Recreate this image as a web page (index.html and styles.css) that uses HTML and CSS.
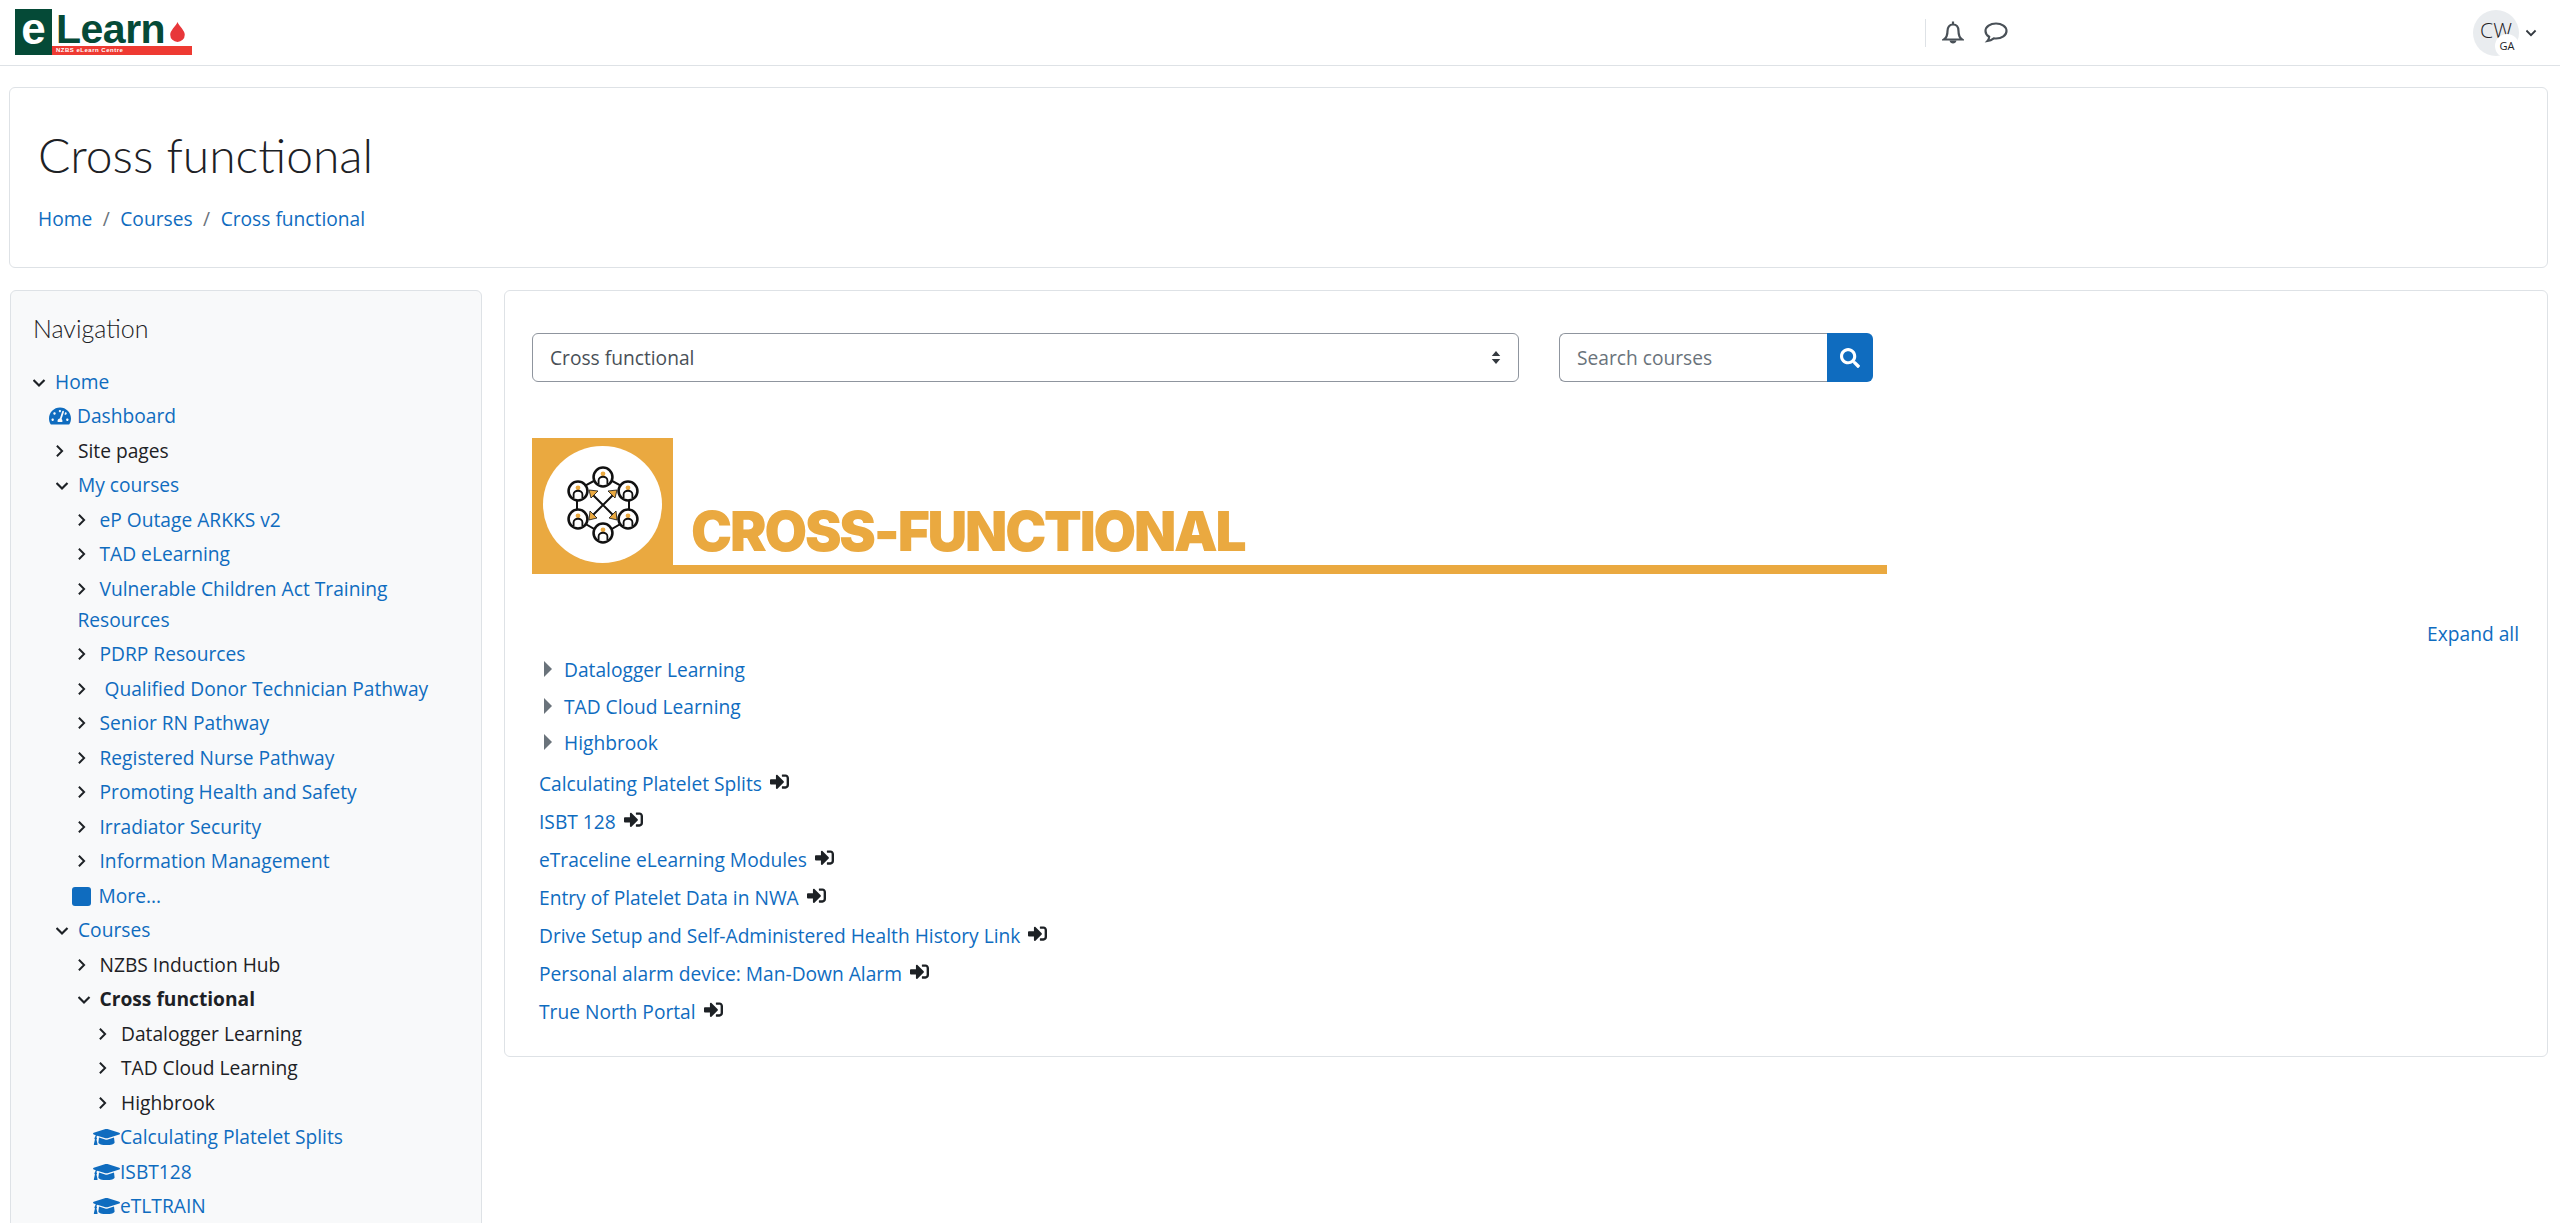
FILE: index.html
```html
<!DOCTYPE html>
<html lang="en">
  <head>
    <meta charset="UTF-8" />
    <title>Cross functional</title>
    <link rel="stylesheet" href="styles.css">
  </head>
  <body>
    <svg class="defs" width="0" height="0">
      <symbol id="chev-right" viewBox="2 0 12 16" preserveAspectRatio="xMinYMid meet"><path d="M3 2l6 6-6 6" fill="none" stroke="currentColor" stroke-width="2.2"/></symbol>
      <symbol id="chev-down" viewBox="1 0 14 12" preserveAspectRatio="xMinYMid meet"><path d="M1.5 3l5.5 5.5L12.500 3" fill="none" stroke="currentColor" stroke-width="2.2"/></symbol>
      <symbol id="cap" viewBox="0 0 640 512"><path d="M622.34 153.2L343.4 67.5c-15.2-4.67-31.6-4.67-46.79 0L17.66 153.2c-23.54 7.23-23.54 38.36 0 45.59l48.63 14.94c-10.67 13.19-17.23 29.28-17.88 46.9C38.78 266.15 32 276.11 32 288c0 10.78 5.68 19.85 13.86 25.65L20.33 428.53C18.11 438.52 25.71 448 35.94 448h56.11c10.24 0 17.84-9.48 15.62-19.47L82.14 313.65C90.32 307.85 96 298.78 96 288c0-11.57-6.47-21.25-15.66-26.87.76-15.02 8.44-28.3 20.69-36.72L296.6 284.5c9.06 2.78 26.44 6.25 46.79 0l278.95-85.7c23.55-7.24 23.55-38.36 0-45.6zM352.79 315.09c-28.53 8.76-52.84 3.92-65.59 0l-145.02-44.55L128 384c0 35.35 85.96 64 192 64s192-28.65 192-64l-14.18-113.47-145.03 44.56z" fill="currentColor"/></symbol>
      <symbol id="enter" viewBox="0 0 512 512"><path d="M416 448h-84c-6.6 0-12-5.4-12-12v-40c0-6.6 5.4-12 12-12h84c17.7 0 32-14.3 32-32V160c0-17.7-14.3-32-32-32h-84c-6.6 0-12-5.400-12-12V76c0-6.600 5.400-12 12-12h84c53 0 96 43 96 96v192c0 53-43 96-96 96zm-47-201L201 79c-15-15-41-4.500-41 17v96H24c-13.300 0-24 10.700-24 24v96c0 13.300 10.700 24 24 24h136v96c0 21.500 26 32 41 17l168-168c9.300-9.400 9.300-24.600 0-34z" fill="currentColor"/></symbol>
      <symbol id="person" viewBox="0 0 24 24">
        <circle cx="12" cy="12" r="10.300" fill="#fff" stroke="#111" stroke-width="2.800"/>
        <circle cx="12" cy="8.500" r="2.600" fill="#eaa940"/>
        <path d="M7.200 20v-4.500a4.800 3.800 0 0 1 9.600 0V20" fill="#fff" stroke="#111" stroke-width="2"/>
      </symbol>
    </svg>

    <header class="topbar">
      <a class="logo" href="#">
        <span class="logo-e">e</span>
        <span class="logo-right">
          <span class="logo-word">Learn<svg class="logo-drop" viewBox="0 0 16 22"><path d="M8 0c2 5 8 9 8 14a8 8 0 0 1-16 0C0 9 6 5 8 0z"/></svg></span>
          <span class="logo-sub">NZBS eLearn Centre</span>
        </span>
      </a>
      <div class="popovers">
        <svg class="bell" viewBox="0 0 22 24"><path d="M11 .5v3M11 3.500c-3.600 0-5.500 2.800-5.500 6.500 0 4.500-1.500 7-3.500 8.500h18c-2-1.500-3.500-4-3.500-8.500 0-3.700-1.900-6.500-5.500-6.500z" fill="none" stroke="#495057" stroke-width="2.200"/><path d="M7.500 19.500c.5 4 6.500 4 7 0z" fill="#495057"/></svg>
        <svg class="comment" viewBox="0 0 24 21"><path d="M12 1.500c-5.800 0-10.500 3.200-10.500 7.500 0 2.500 1.500 4.500 3.700 5.800-.1 1.600-.6 3-1.700 4.200 2.500-.3 4.700-1.500 6.300-2.700.7.100 1.400.2 2.200.2 5.800 0 10.500-3.200 10.500-7.500S17.800 1.500 12 1.500z" fill="none" stroke="#495057" stroke-width="2.200"/></svg>
      </div>
      <div class="usermenu">
        <span class="avatar">CW<span class="avatar-badge">GA</span></span>
        <svg class="menu-caret"><use href="#chev-down"/></svg>
      </div>
    </header>

    <section class="page-head">
      <h1>Cross functional</h1>
      <nav class="crumbs">
        <a href="#">Home</a><span class="sep">/</span><a href="#">Courses</a><span class="sep">/</span><a href="#">Cross functional</a>
      </nav>
    </section>

    <div class="columns">
      <aside class="sidebar">
        <h2>Navigation</h2>
        <ul class="navtree">
          <li class="lv1"><svg class="tw down"><use href="#chev-down"/></svg><a href="#">Home</a></li>
          <li class="lv2 dash">
            <svg class="dash-icon" viewBox="0 0 576 512"><path d="M288 32C128.940 32 0 160.940 0 320c0 52.800 14.250 102.260 39.060 144.800 5.610 9.620 16.300 15.200 27.440 15.200h443c11.140 0 21.830-5.580 27.440-15.200C561.750 422.260 576 372.800 576 320c0-159.060-128.940-288-288-288zm0 64c14.710 0 26.580 10.130 30.320 23.650-1.110 2.260-2.640 4.230-3.450 6.670l-9.220 27.670c-5.130 3.490-10.970 6.010-17.640 6.010-17.670 0-32-14.330-32-32S270.330 96 288 96zM96 384c-17.670 0-32-14.330-32-32s14.330-32 32-32 32 14.330 32 32-14.330 32-32 32zm48-160c-17.670 0-32-14.330-32-32s14.330-32 32-32 32 14.330 32 32-14.330 32-32 32zm246.770-72.410l-61.330 184C343.130 347.330 352 364.540 352 384c0 11.720-3.380 22.550-8.880 32H232.880c-5.500-9.450-8.880-20.280-8.880-32 0-33.940 26.500-61.430 59.900-63.590l61.340-184.010c4.170-12.560 17.730-19.450 30.360-15.170 12.570 4.190 19.350 17.790 15.170 30.360zm14.660 57.200l15.520-46.550c3.470-1.290 7.130-2.230 11.050-2.230 17.670 0 32 14.330 32 32s-14.330 32-32 32c-11.380-.01-20.890-6.280-26.570-15.220zM480 384c-17.670 0-32-14.330-32-32s14.330-32 32-32 32 14.330 32 32-14.330 32-32 32z" fill="currentColor"/></svg><a href="#">Dashboard</a>
          </li>
          <li class="lv2"><svg class="tw"><use href="#chev-right"/></svg><span>Site pages</span></li>
          <li class="lv2"><svg class="tw down"><use href="#chev-down"/></svg><a href="#">My courses</a></li>
          <li class="lv3"><svg class="tw"><use href="#chev-right"/></svg><a href="#">eP Outage ARKKS v2</a></li>
          <li class="lv3"><svg class="tw"><use href="#chev-right"/></svg><a href="#">TAD eLearning</a></li>
          <li class="lv3 wrapped"><svg class="tw"><use href="#chev-right"/></svg><a href="#">Vulnerable Children Act Training Resources</a></li>
          <li class="lv3"><svg class="tw"><use href="#chev-right"/></svg><a href="#">PDRP Resources</a></li>
          <li class="lv3"><svg class="tw"><use href="#chev-right"/></svg><a href="#">&nbsp;Qualified Donor Technician Pathway</a></li>
          <li class="lv3"><svg class="tw"><use href="#chev-right"/></svg><a href="#">Senior RN Pathway</a></li>
          <li class="lv3"><svg class="tw"><use href="#chev-right"/></svg><a href="#">Registered Nurse Pathway</a></li>
          <li class="lv3"><svg class="tw"><use href="#chev-right"/></svg><a href="#">Promoting Health and Safety</a></li>
          <li class="lv3"><svg class="tw"><use href="#chev-right"/></svg><a href="#">Irradiator Security</a></li>
          <li class="lv3"><svg class="tw"><use href="#chev-right"/></svg><a href="#">Information Management</a></li>
          <li class="lv3 more"><span class="more-box"></span><a href="#">More...</a></li>
          <li class="lv2"><svg class="tw down"><use href="#chev-down"/></svg><a href="#">Courses</a></li>
          <li class="lv3"><svg class="tw"><use href="#chev-right"/></svg><span>NZBS Induction Hub</span></li>
          <li class="lv3"><svg class="tw down"><use href="#chev-down"/></svg><strong>Cross functional</strong></li>
          <li class="lv4"><svg class="tw"><use href="#chev-right"/></svg><span>Datalogger Learning</span></li>
          <li class="lv4"><svg class="tw"><use href="#chev-right"/></svg><span>TAD Cloud Learning</span></li>
          <li class="lv4"><svg class="tw"><use href="#chev-right"/></svg><span>Highbrook</span></li>
          <li class="lv4 course"><svg class="cap"><use href="#cap"/></svg><a href="#">Calculating Platelet Splits</a></li>
          <li class="lv4 course"><svg class="cap"><use href="#cap"/></svg><a href="#">ISBT128</a></li>
          <li class="lv4 course"><svg class="cap"><use href="#cap"/></svg><a href="#">eTLTRAIN</a></li>
        </ul>
      </aside>

      <main class="content">
        <div class="controls">
          <div class="fake-select">
            <span>Cross functional</span>
            <svg class="updown" viewBox="0 0 10 16"><path d="M5 1l4.500 5.500h-9zM5 15L.5 9.500h9z" fill="#343a40"/></svg>
          </div>
          <div class="searchbox">
            <span class="placeholder">Search courses</span>
            <button class="searchbtn">
              <svg viewBox="0 0 512 512"><path d="M505 442.700L405.300 343c-4.500-4.500-10.600-7-17-7H372c27.600-35.300 44-79.700 44-128C416 93.100 322.900 0 208 0S0 93.100 0 208s93.100 208 208 208c48.300 0 92.700-16.400 128-44v16.300c0 6.400 2.500 12.500 7 17l99.700 99.700c9.400 9.400 24.600 9.400 33.900 0l28.300-28.300c9.400-9.400 9.400-24.600.1-34zM208 336c-70.700 0-128-57.200-128-128 0-70.700 57.200-128 128-128 70.700 0 128 57.200 128 128 0 70.700-57.200 128-128 128z" fill="#fff"/></svg>
            </button>
          </div>
        </div>

        <div class="banner">
          <div class="banner-square">
            <div class="banner-circle">
              <svg class="network" viewBox="0 0 72 78">
                <path d="M36 10L10 24v29l26 15 26-15V24z" fill="none" stroke="#111" stroke-width="2"/>
                <path d="M24 27l24 24M48 27L24 51" stroke="#111" stroke-width="2"/>
                <path d="M22 24l9 1-7 7zM50 24l-9 1 7 7zM22 54l1-9 7 7zM50 54l-1-9-7 7z" fill="#eaa940" stroke="#111" stroke-width=".8"/>
                <use href="#person" x="25" y="0" width="22" height="22"/>
                <use href="#person" x="0" y="14" width="22" height="22"/>
                <use href="#person" x="50" y="14" width="22" height="22"/>
                <use href="#person" x="0" y="42" width="22" height="22"/>
                <use href="#person" x="50" y="42" width="22" height="22"/>
                <use href="#person" x="25" y="56" width="22" height="22"/>
              </svg>
            </div>
          </div>
          <div class="banner-right">
            <span class="banner-title">CROSS-FUNCTIONAL</span>
            <div class="banner-rule"></div>
          </div>
        </div>

        <div class="expand-row"><a href="#">Expand all</a></div>

        <ul class="cat-tree">
          <li><span class="tri"></span><a href="#">Datalogger Learning</a></li>
          <li><span class="tri"></span><a href="#">TAD Cloud Learning</a></li>
          <li><span class="tri"></span><a href="#">Highbrook</a></li>
        </ul>

        <ul class="course-links">
          <li><a href="#">Calculating Platelet Splits</a><svg class="enter"><use href="#enter"/></svg></li>
          <li><a href="#">ISBT 128</a><svg class="enter"><use href="#enter"/></svg></li>
          <li><a href="#">eTraceline eLearning Modules</a><svg class="enter"><use href="#enter"/></svg></li>
          <li><a href="#">Entry of Platelet Data in NWA</a><svg class="enter"><use href="#enter"/></svg></li>
          <li><a href="#">Drive Setup and Self-Administered Health History Link</a><svg class="enter"><use href="#enter"/></svg></li>
          <li><a href="#">Personal alarm device: Man-Down Alarm</a><svg class="enter"><use href="#enter"/></svg></li>
          <li><a href="#">True North Portal</a><svg class="enter"><use href="#enter"/></svg></li>
        </ul>
      </main>
    </div>
  </body>
</html>
```

FILE: styles.css
```css
html, body {
  height: 100%;
  overflow: hidden;
}
body {
  margin: 0;
  font-family: "Open Sans", sans-serif;
  font-size: 19.2px;
  line-height: 31px;
  color: #1d2125;
  background-color: #fff;
}
a {
  color: #0f6cbf;
  text-decoration: none;
}
ul {
  list-style: none;
  margin: 0;
  padding: 0;
}
.defs {
  position: absolute;
}

/* top bar */
.topbar {
  display: flex;
  align-items: center;
  height: 65px;
  border-bottom: 1px solid #dee2e6;
  padding-left: 15px;
}
.logo {
  display: flex;
  height: 46px;
  margin-top: -1px;
}
.logo-e {
  width: 37px;
  background-color: #054a37;
  color: #fff;
  font-family: "Liberation Sans", sans-serif;
  font-weight: bold;
  font-size: 44px;
  line-height: 40px;
  text-align: center;
}
.logo-right {
  display: flex;
  flex-direction: column;
  width: 140px;
}
.logo-word {
  display: flex;
  height: 37px;
  padding-left: 4px;
  color: #054a37;
  font-family: "Liberation Sans", sans-serif;
  font-weight: bold;
  font-size: 41px;
  line-height: 40px;
  letter-spacing: -.5px;
}
.logo-drop {
  width: 15px;
  height: 20px;
  margin: 13px 0 0 5px;
  fill: #e8373a;
}
.logo-sub {
  height: 9px;
  padding-left: 4px;
  background-color: #ee3a32;
  color: #fff;
  font-family: "Liberation Sans", sans-serif;
  font-weight: bold;
  font-size: 6px;
  line-height: 9px;
  letter-spacing: .5px;
  white-space: nowrap;
}
.popovers {
  display: flex;
  align-items: center;
  margin-left: auto;
  height: 28px;
  padding-left: 16px;
  border-left: 1px solid #dee2e6;
  margin-right: 465px;
}
.bell {
  width: 22px;
  height: 24px;
}
.comment {
  width: 24px;
  height: 21px;
  margin-left: 20px;
}
.usermenu {
  display: flex;
  align-items: center;
  margin-right: 22px;
}
.avatar {
  position: relative;
  width: 46px;
  height: 46px;
  border-radius: 50%;
  background-color: #e9ecef;
  font-size: 21px;
  font-weight: 300;
  line-height: 40px;
  text-align: center;
}
.avatar-badge {
  position: absolute;
  right: 0;
  bottom: -2px;
  width: 24px;
  height: 24px;
  border-radius: 50%;
  background-color: #fff;
  font-size: 11px;
  font-weight: 400;
  line-height: 24px;
}
.menu-caret {
  width: 12px;
  height: 10px;
  margin-left: 7px;
  color: #343a40;
}

/* page heading */
.page-head {
  margin: 21px 12px 0 9px;
  height: 179px;
  padding: 0 28px;
  border: 1px solid #dee2e6;
  border-radius: 6px;
}
.page-head h1 {
  margin: 33px 0 0;
  font-family: Lato, sans-serif;
  font-size: 48px;
  font-weight: 300;
  line-height: 68px;
}
.crumbs {
  margin-top: 14px;
}
.sep {
  margin: 0 10.500px;
  color: #6a737b;
}

/* columns */
.columns {
  display: flex;
  align-items: flex-start;
  gap: 22px;
  margin: 22px 12px 0 10px;
}
.sidebar {
  flex: none;
  box-sizing: border-box;
  width: 472px;
  height: 960px;
  padding: 20px 0 0;
  background-color: #f8f9fa;
  border: 1px solid #dee2e6;
  border-radius: 6px;
}
.sidebar h2 {
  margin: 0 0 19px 22px;
  font-family: Lato, sans-serif;
  font-size: 25px;
  font-weight: 300;
  line-height: 34px;
}
.navtree li {
  padding-top: 1.750px;
  padding-bottom: 1.750px;
}
.lv1 { padding-left: 22px; }
.lv2 { padding-left: 45px; }
.lv3 { padding-left: 66.500px; }
.lv4 { padding-left: 88px; }
.tw {
  display: inline-block;
  width: 22px;
  height: 14px;
  color: #1d2125;
}
.tw.down {
  height: 12px;
}
.dash-icon {
  display: inline-block;
  width: 22px;
  height: 20px;
  margin: 0 6px 0 -7px;
  color: #0f6cbf;
  vertical-align: -3px;
}
.more-box {
  display: inline-block;
  width: 19px;
  height: 19px;
  margin: 0 8px 0 -6px;
  border-radius: 3px;
  background-color: #0f6cbf;
  vertical-align: -3px;
}
.cap {
  display: inline-block;
  width: 27px;
  height: 22px;
  margin-left: -6px;
  color: #0f6cbf;
  vertical-align: -4px;
}
.content {
  flex: 1;
  box-sizing: border-box;
  height: 767px;
  padding: 0 0 0 27px;
  border: 1px solid #dee2e6;
  border-radius: 6px;
}

/* filters */
.controls {
  display: flex;
  gap: 40px;
  margin-top: 42px;
}
.fake-select {
  display: flex;
  align-items: center;
  justify-content: space-between;
  box-sizing: border-box;
  width: 987px;
  height: 49px;
  padding: 0 17px;
  border: 1px solid #8f959e;
  border-radius: 6px;
  color: #495057;
}
.updown {
  width: 10px;
  height: 15px;
}
.searchbox {
  display: flex;
  box-sizing: border-box;
  width: 314px;
  height: 49px;
}
.placeholder {
  flex: 1;
  padding-left: 17px;
  border: 1px solid #8f959e;
  border-right: 0;
  border-radius: 6px 0 0 6px;
  color: #6a737b;
  line-height: 47px;
}
.searchbtn {
  width: 46px;
  border: 0;
  padding: 0;
  border-radius: 0 6px 6px 0;
  background-color: #0f6cbf;
}
.searchbtn svg {
  display: block;
  width: 20px;
  height: 20px;
  margin: 0 auto;
}

/* banner */
.banner {
  display: flex;
  width: 1355px;
  height: 136px;
  margin-top: 56px;
}
.banner-square {
  display: flex;
  align-items: center;
  justify-content: center;
  width: 141px;
  background-color: #eaa940;
}
.banner-circle {
  display: flex;
  align-items: center;
  justify-content: center;
  width: 119px;
  height: 117px;
  margin-top: -3px;
  border-radius: 50%;
  background-color: #fff;
}
.network {
  width: 72px;
  height: 78px;
}
.banner-right {
  display: flex;
  flex-direction: column;
  flex: 1;
  justify-content: flex-end;
}
.banner-title {
  padding-left: 18px;
  color: #eaa940;
  font-family: Inter, sans-serif;
  font-size: 55px;
  font-weight: 900;
  line-height: 60px;
  letter-spacing: -2.200px;
  margin-bottom: 4px;
  white-space: nowrap;
}
.banner-rule {
  height: 9px;
  background-color: #eaa940;
}

/* category list */
.expand-row {
  margin: 44px 28px 0 0;
  text-align: right;
}
.cat-tree {
  margin-top: 5px;
}
.cat-tree li {
  height: 36.500px;
  padding-left: 12px;
}
.tri {
  display: inline-block;
  width: 0;
  height: 0;
  margin-right: 12px;
  border-left: 8px solid #6a737b;
  border-top: 8px solid transparent;
  border-bottom: 8px solid transparent;
}
.course-links {
  margin-top: 4px;
}
.course-links li {
  height: 38px;
  padding-left: 7px;
}
.enter {
  display: inline-block;
  width: 19px;
  height: 19px;
  margin-left: 8px;
  color: #1d2125;
  vertical-align: 0;
}
```
